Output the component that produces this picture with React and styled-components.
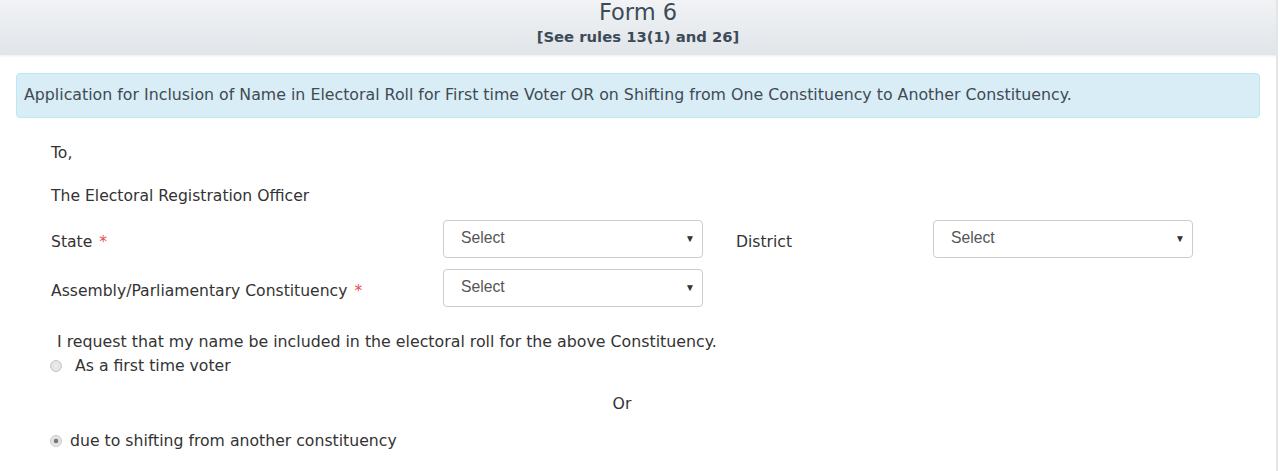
import React from "react";
import styled, { createGlobalStyle } from "styled-components";

const Global = createGlobalStyle`
  html, body { margin: 0; padding: 0; background: #fff; }
  body { font-family: "DejaVu Sans", Verdana, sans-serif; color: #333; }
`;

const Page = styled.div`
  width: 1278px;
  height: 471px;
  border-right: 2px solid #e3e6e9;
  box-sizing: border-box;
  overflow: hidden;
`;

const Header = styled.header`
  height: 55px;
  background: linear-gradient(#f1f3f5, #e0e5e9);
  display: flex;
  flex-direction: column;
  align-items: center;
  box-shadow: 0 1px 2px rgba(0,0,0,0.08);
`;

const Title = styled.h1`
  margin: 0;
  font-size: 22.5px;
  font-weight: normal;
  color: #3d4b58;
  line-height: 24px;
`;

const Sub = styled.div`
  font-size: 14.8px;
  font-weight: bold;
  color: #3d4b58;
  line-height: 24px;
  margin-top: 1px;
`;

const Body = styled.div`
  padding: 18px 16px 0 16px;
`;

const Alert = styled.div`
  background: #d9edf7;
  border: 1px solid #bce8f1;
  border-radius: 4px;
  height: 45px;
  box-sizing: border-box;
  display: flex;
  align-items: center;
  padding: 0 7px 2px;
  font-size: 15.8px;
  color: #404a52;
`;

const Form = styled.div`
  padding: 17px 0 0 35px;
  display: flex;
  flex-direction: column;
`;

const Line = styled.div`
  font-size: 15.6px;
  color: #333;
  height: ${(p) => p.h}px;
  display: flex;
  align-items: center;
`;

const Row = styled.div`
  display: flex;
  align-items: center;
  height: 37px;
  margin-bottom: ${(p) => p.mb || 0}px;
`;

const Label = styled.div`
  width: ${(p) => p.w}px;
  padding-left: ${(p) => p.pl || 0}px;
  box-sizing: border-box;
  font-size: 15.6px;
  color: #333;
  flex-shrink: 0;
  margin-top: 6px;
`;

const Star = styled.span`
  color: #e74c4c;
  margin-left: 7px;
`;

const SelectBox = styled.div`
  width: 260px;
  height: 38px;
  box-sizing: border-box;
  border: 1px solid #ccc;
  border-radius: 4px;
  display: flex;
  align-items: center;
  justify-content: space-between;
  padding: 0 7px 1px 17px;
  font-family: "Liberation Sans", Arial, sans-serif;
  font-size: 15.7px;
  color: #555;
  flex-shrink: 0;
`;

const Arrow = styled.span`
  font-size: 10px;
  color: #333;
`;

const Request = styled.div`
  margin: 23px 0 0 6px;
  font-size: 15.8px;
  color: #333;
  line-height: 25px;
`;

const Radio = styled.div`
  display: flex;
  align-items: center;
  gap: ${(p) => p.gap}px;
  font-size: 15.7px;
  color: #333;
  line-height: 24px;
  margin-left: -1px;
`;

const Dot = styled.span`
  width: 12px;
  height: 12px;
  border-radius: 50%;
  box-sizing: border-box;
  border: 1px solid #c8c8c8;
  background: radial-gradient(circle, ${(p) => (p.on ? "#777 0 2px, #e4e4e4 2.6px" : "#eee 0, #dcdcdc 100%")});
  flex-shrink: 0;
`;

const Or = styled.div`
  text-align: center;
  font-size: 15.7px;
  padding: 14px 0 13px;
  margin-left: -35px;
  width: 1212px;
  line-height: 24px;
`;

export default function App() {
  return (
    <>
      <Global />
      <Page>
        <Header>
          <Title>Form 6</Title>
          <Sub>[See rules 13(1) and 26]</Sub>
        </Header>
        <Body>
          <Alert>
            Application for Inclusion of Name in Electoral Roll for First time Voter OR on Shifting from One Constituency to Another Constituency.
          </Alert>
          <Form>
            <Line h={36}>To,</Line>
            <Line h={49}>The Electoral Registration Officer</Line>
            <Row mb={12}>
              <Label w={392}>State<Star>*</Star></Label>
              <SelectBox>Select<Arrow>▼</Arrow></SelectBox>
              <Label w={230} pl={33}>District</Label>
              <SelectBox>Select<Arrow>▼</Arrow></SelectBox>
            </Row>
            <Row>
              <Label w={392}>Assembly/Parliamentary Constituency<Star>*</Star></Label>
              <SelectBox>Select<Arrow>▼</Arrow></SelectBox>
            </Row>
            <Request>I request that my name be included in the electoral roll for the above Constituency.</Request>
            <Radio gap={13}><Dot />As a first time voter</Radio>
            <Or>Or</Or>
            <Radio gap={8}><Dot on />due to shifting from another constituency</Radio>
          </Form>
        </Body>
      </Page>
    </>
  );
}
